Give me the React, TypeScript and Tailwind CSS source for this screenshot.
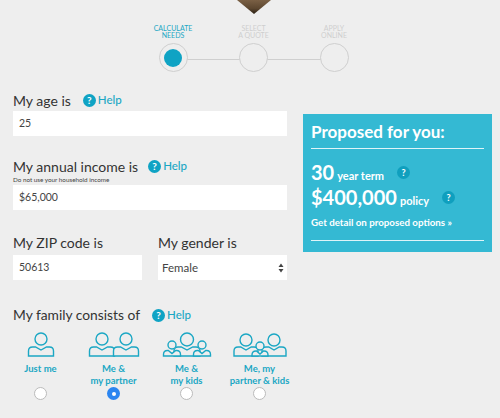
import React from 'react';

const TEAL = '#1ba7c4';

function HelpLink() {
  return (
    <span className="inline-flex items-center gap-[2px] text-[11.5px] leading-none font-medium text-[#1ba7c4]">
      <span className="flex h-[13px] w-[13px] items-center justify-center rounded-full bg-[#0fa3c4] text-[10px] font-bold text-white">?</span>
      Help
    </span>
  );
}

function TextBox({ value, className }: { value: string; className?: string }) {
  return (
    <div className={`flex h-[25px] items-center bg-white pl-[6px] text-[10.5px] text-[#444] ${className ?? ''}`}>{value}</div>
  );
}

function Step({ label, active }: { label: string[]; active?: boolean }) {
  return (
    <div className="flex w-[40px] flex-col items-center">
      <div className={`text-center text-[7px] leading-[7px] uppercase ${active ? 'text-[#1ba7c4]' : 'text-[#cfcfcf]'}`}>
        {label.map((l) => (
          <div key={l}>{l}</div>
        ))}
      </div>
      <div className="mt-[4px] flex h-[29px] w-[29px] items-center justify-center rounded-full border-[1.5px] border-[#cfcfcf] bg-[#eeeeee]">
        {active && <div className="h-[18px] w-[18px] rounded-full bg-[#0fa3c4]" />}
      </div>
    </div>
  );
}

function Person({ cx, headY, r, shoulderY, w, base }: { cx: number; headY: number; r: number; shoulderY: number; w: number; base: number }) {
  const left = cx - w / 2;
  const right = cx + w / 2;
  return (
    <g>
      <path d={`M${left} ${base} V${shoulderY + 4} Q${left} ${shoulderY} ${left + 4} ${shoulderY} H${cx - w * 0.22} L${cx} ${shoulderY + 3} L${cx + w * 0.22} ${shoulderY} H${right - 4} Q${right} ${shoulderY} ${right} ${shoulderY + 4} V${base} Z`} />
      <circle cx={cx} cy={headY} r={r} />
    </g>
  );
}

function FamilyOption({ label, selected, children, width }: { label: string[]; selected?: boolean; children: React.ReactNode; width: number }) {
  return (
    <div className="flex w-[73px] flex-col items-center">
      <svg width={width} height="26" viewBox={`0 0 ${width} 26`} fill="#eeeeee" stroke={TEAL} strokeWidth="1.4">
        {children}
      </svg>
      <div className="mt-[5px] h-[24px] text-center text-[9.5px] leading-[11.5px] font-bold whitespace-nowrap text-[#1ba7c4]">
        {label.map((l) => (
          <div key={l}>{l}</div>
        ))}
      </div>
      {selected ? (
        <div className="flex h-[13px] w-[13px] items-center justify-center rounded-full bg-[#2b85f0]">
          <div className="h-[4px] w-[4px] rounded-full bg-white" />
        </div>
      ) : (
        <div className="h-[13px] w-[13px] rounded-full border border-[#bbb] bg-white" />
      )}
    </div>
  );
}

export default function App() {
  return (
    <div className="h-[418px] w-[500px] overflow-hidden bg-[#eeeeee] font-['Lato','Liberation_Sans',sans-serif]">
      <div className="flex h-[14px] justify-center pl-[8px]">
        <svg width="36" height="14" viewBox="0 0 36 14">
          <defs>
            <linearGradient id="photo" x1="0" y1="0" x2="0" y2="1">
              <stop offset="0" stopColor="#7a6045" />
              <stop offset="0.6" stopColor="#5d4730" />
              <stop offset="1" stopColor="#2a2014" />
            </linearGradient>
          </defs>
          <path d="M1 0H35L18 14Z" fill="url(#photo)" />
        </svg>
      </div>

      <div className="relative mt-[11px] ml-[153px] flex w-[201px] justify-between">
        <div className="absolute top-[33.5px] right-[20px] left-[20px] h-[1.5px] bg-[#cfcfcf]" />
        <div className="relative"><Step label={['Calculate', 'Needs']} active /></div>
        <div className="relative"><Step label={['Select', 'A Quote']} /></div>
        <div className="relative"><Step label={['Apply', 'Online']} /></div>
      </div>

      <div className="mt-[18px] flex pl-[13px]">
        <div className="w-[274px]">
          <div className="flex h-[20px] items-center gap-[12px] text-[14px] text-[#333]">
            <span>My age is</span>
            <HelpLink />
          </div>
          <TextBox value="25" className="mt-[1px]" />

          <div className="mt-[20px] flex h-[20px] items-center gap-[10px] text-[14px] text-[#333]">
            <span>My annual income is</span>
            <HelpLink />
          </div>
          <div className="text-[6.3px] leading-[8px] text-[#444]">Do not use your household income</div>
          <TextBox value="$65,000" className="mt-[1px]" />

          <div className="mt-[24px] flex gap-[16px]">
            <div className="w-[129px]">
              <div className="h-[20px] text-[14px] leading-[18px] text-[#333]">My ZIP code is</div>
              <TextBox value="50613" className="mt-[1px]" />
            </div>
            <div className="w-[129px]">
              <div className="h-[20px] text-[14px] leading-[18px] text-[#333]">My gender is</div>
              <div className="mt-[1px] flex h-[25px] items-center justify-between bg-white pr-[3px] pl-[4px] text-[11.5px] text-[#444]">
                Female
                <svg width="6" height="10" viewBox="0 0 6 10" fill="#444">
                  <path d="M3 0.5L5.5 4H0.5Z" />
                  <path d="M3 9.5L5.5 6H0.5Z" />
                </svg>
              </div>
            </div>
          </div>

          <div className="mt-[25px] flex h-[20px] items-center gap-[12px] text-[13.8px] text-[#333]">
            <span>My family consists of</span>
            <HelpLink />
          </div>

          <div className="mt-[7px] -ml-[9px] flex w-[300px]">
            <FamilyOption label={['Just me']} width={28}>
              <Person cx={14} headY={7} r={6} shoulderY={15} w={25} base={24} />
            </FamilyOption>
            <FamilyOption label={['Me &', 'my partner']} selected width={52}>
              <Person cx={14} headY={7} r={6} shoulderY={15} w={25} base={24} />
              <Person cx={38} headY={7} r={6} shoulderY={15} w={25} base={24} />
            </FamilyOption>
            <FamilyOption label={['Me &', 'my kids']} width={50}>
              <Person cx={25} headY={7.5} r={6.5} shoulderY={15} w={26} base={24} />
              <Person cx={10} headY={13} r={4} shoulderY={18.5} w={17} base={24} />
              <Person cx={40} headY={13} r={4} shoulderY={18.5} w={17} base={24} />
            </FamilyOption>
            <FamilyOption label={['Me, my', 'partner & kids']} width={54}>
              <Person cx={13} headY={8} r={6} shoulderY={15} w={24} base={24} />
              <Person cx={41} headY={8} r={6} shoulderY={15} w={24} base={24} />
              <Person cx={27} headY={14} r={4} shoulderY={19} w={16} base={24} />
            </FamilyOption>
          </div>
        </div>

        <div className="mt-[24px] ml-[16px] h-[138px] w-[189px] bg-[#34b9d3] px-[8px] pt-[7px] text-white">
          <div className="border-b border-[#dff4f8] pb-[5px] text-[17px] leading-[22px] font-bold">Proposed for you:</div>
          <div className="mt-[12px] flex items-baseline text-[11px] font-bold">
            <span className="text-[20px] leading-[22px]">30</span>
            <span className="ml-[3px]">year term</span>
            <span className="ml-[13px] flex h-[13px] w-[13px] items-center justify-center self-center rounded-full bg-[#0f9fbe] text-[9px]">?</span>
          </div>
          <div className="mt-[1px] flex items-baseline text-[11px] font-bold">
            <span className="text-[20px] leading-[22px]">$400,000</span>
            <span className="ml-[3px]">policy</span>
            <span className="ml-[13px] flex h-[13px] w-[13px] items-center justify-center self-center rounded-full bg-[#0f9fbe] text-[9px]">?</span>
          </div>
          <div className="mt-[7px] text-[9.75px] leading-[12px] font-bold">Get detail on proposed options »</div>
          <div className="mt-[12px] h-px bg-[#dff4f8]" />
        </div>
      </div>
    </div>
  );
}
